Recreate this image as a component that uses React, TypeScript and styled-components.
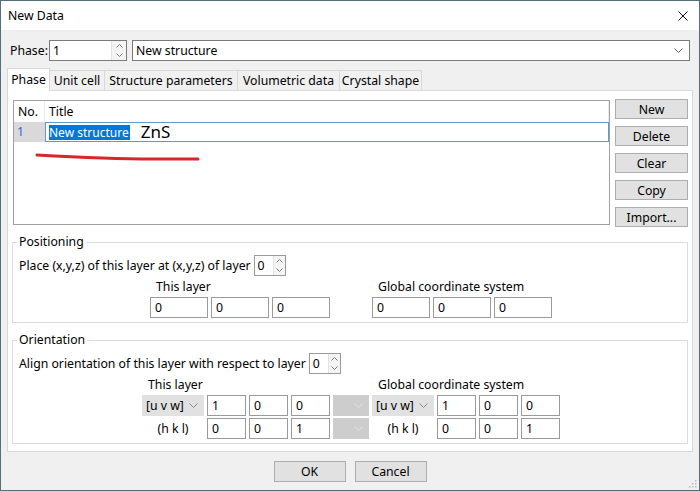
import React from "react";
import styled, { createGlobalStyle } from "styled-components";

const GlobalStyle = createGlobalStyle`
  html, body { margin: 0; padding: 0; background: #ffffff; }
  body {
    font-family: "Noto Sans", "Open Sans", "Liberation Sans", sans-serif;
    font-size: 12.25px;
    color: #000;
  }
  * { box-sizing: border-box; }
`;

const Window = styled.div`
  position: relative;
  width: 700px;
  height: 491px;
  border: 1px solid #52707c;
  background: #f0f0f0;
  display: flex;
  flex-direction: column;
  overflow: hidden;
`;

const TitleBar = styled.div`
  flex: none;
  height: 29px;
  background: #ffffff;
  display: flex;
  align-items: center;
  justify-content: space-between;
  padding: 0 11px 0 7px;
`;

const TitleText = styled.span`
  font-size: 12.25px;
`;

const Body = styled.div`
  flex: 1;
  min-height: 0;
  display: flex;
  flex-direction: column;
  padding: 10px 6px 8px 6px;
`;

const PhaseRow = styled.div`
  flex: none;
  display: flex;
  align-items: center;
  height: 21px;
  padding-left: 3px;
  margin-right: 3px;
`;

const FieldLabel = styled.span`
  flex: none;
  width: 39px;
`;

const Spin = styled.div<{ $w: number; $dark?: boolean }>`
  flex: none;
  display: flex;
  width: ${(p) => p.$w}px;
  height: 21px;
  border: 1px solid ${(p) => (p.$dark ? "#7a7a7a" : "#9a9a9a")};
  background: #ffffff;
`;

const SpinValue = styled.div`
  flex: 1;
  padding-left: 3px;
  line-height: 19px;
`;

const SpinArrows = styled.div<{ $w: number }>`
  flex: none;
  width: ${(p) => p.$w}px;
  display: flex;
  flex-direction: column;
  background: #f4f4f4;
  border-left: 1px solid #e2e2e2;
`;

const SpinArrow = styled.div`
  flex: 1;
  display: flex;
  align-items: center;
  justify-content: center;
`;

const Combo = styled.div`
  flex: 1;
  margin-left: 5px;
  height: 21px;
  border: 1px solid #7a7a7a;
  background: #ffffff;
  display: flex;
  align-items: center;
  justify-content: space-between;
  padding: 0 6px 0 3px;
`;

const TabStrip = styled.div`
  flex: none;
  position: relative;
  z-index: 1;
  display: flex;
  align-items: flex-start;
  height: 20px;
  margin-top: 9px;
`;

const Tab = styled.div<{ $w: number; $active?: boolean }>`
  flex: none;
  width: ${(p) => p.$w}px;
  height: ${(p) => (p.$active ? 23 : 20)}px;
  margin-top: ${(p) => (p.$active ? -2 : 0)}px;
  margin-left: ${(p) => (p.$active ? 0 : -1)}px;
  border: 1px solid #d9d9d9;
  border-bottom: none;
  background: ${(p) => (p.$active ? "#ffffff" : "#f0f0f0")};
  text-align: center;
  line-height: ${(p) => (p.$active ? 21 : 19)}px;
  white-space: nowrap;
  &:first-child {
    margin-left: 0;
  }
`;

const Panel = styled.div`
  flex: 1;
  min-height: 0;
  display: flex;
  flex-direction: column;
  background: #ffffff;
  border: 1px solid #d9d9d9;
  padding: 8px 4px 0 4px;
`;

const TopSection = styled.div`
  flex: none;
  display: flex;
  align-items: flex-start;
`;

const Table = styled.div`
  flex: none;
  width: 597px;
  height: 125px;
  margin: 1px 0 0 1px;
  border: 1px solid #a0a0a0;
  background: #ffffff;
  display: flex;
  flex-direction: column;
`;

const TableRow = styled.div<{ $h: number }>`
  display: grid;
  grid-template-columns: 31px 1fr;
  height: ${(p) => p.$h}px;
`;

const HeaderCell = styled.div`
  padding-left: 4px;
  line-height: 21px;
  border-right: 1px solid #ececec;
`;

const IndexCell = styled.div`
  background: #d9d9d9;
  color: #3a5fcd;
  padding-left: 3px;
  line-height: 20px;
`;

const EditCell = styled.div`
  border: 1px solid #5a9ad6;
  display: flex;
  align-items: center;
  gap: 11px;
  padding-left: 3px;
`;

const SelectedText = styled.span`
  background: #0078d7;
  color: #ffffff;
  line-height: 15px;
  padding: 0 1px 0 0;
  font-size: 12px;
`;

const BigText = styled.span`
  font-size: 17px;
  line-height: 18px;
`;

const SideButtons = styled.div`
  flex: none;
  display: flex;
  flex-direction: column;
  gap: 7px;
  width: 73px;
  margin-left: 5px;
`;

const Button = styled.button<{ $w?: number; $h?: number }>`
  width: ${(p) => (p.$w ? `${p.$w}px` : "100%")};
  height: ${(p) => p.$h ?? 20}px;
  padding: 0;
  border: 1px solid #adadad;
  background: #e1e1e1;
  font: inherit;
  color: #000;
`;

const Group = styled.fieldset<{ $top: number; $bottom: number }>`
  margin: ${(p) => p.$top}px 0 0 0;
  padding: 0 6px ${(p) => p.$bottom}px 6px;
  border: 1px solid #dcdcdc;
  min-width: 0;
`;

const Legend = styled.legend`
  padding: 0 2px;
  margin-left: -2px;
  line-height: 16px;
`;

const InlineRow = styled.div`
  display: flex;
  align-items: center;
  height: 21px;
  margin-top: 5px;
  gap: 3px;
  white-space: nowrap;
`;

const CoordBlocks = styled.div`
  display: flex;
  gap: 42px;
  margin: 3px 0 0 131px;
`;

const CoordBlock = styled.div`
  display: flex;
  flex-direction: column;
  gap: 2px;
`;

const SubLabel = styled.div<{ $span?: string }>`
  padding-left: 6px;
  line-height: 16px;
  white-space: nowrap;
  grid-column: ${(p) => p.$span ?? "auto"};
`;

const Inputs = styled.div`
  display: flex;
  gap: 3px;
`;

const NumBox = styled.div<{ $w?: number }>`
  width: ${(p) => (p.$w ? `${p.$w}px` : "auto")};
  height: 21px;
  border: 1px solid #9a9a9a;
  background: #ffffff;
  padding-left: 4px;
  line-height: 19px;
`;

const OrientGrid = styled.div`
  display: grid;
  grid-template-columns: 62px 39px 39px 39px 36px 62px 39px 39px 39px;
  grid-template-rows: 16px 21px 21px;
  column-gap: 3px;
  row-gap: 2px;
  margin: 3px 0 0 123px;
`;

const Select = styled.div<{ $disabled?: boolean }>`
  display: flex;
  align-items: center;
  justify-content: ${(p) => (p.$disabled ? "flex-end" : "space-between")};
  height: 21px;
  background: ${(p) => (p.$disabled ? "#cdcdcd" : "#e1e1e1")};
  padding: 0 6px 0 4px;
  white-space: nowrap;
`;

const PlainCell = styled.div`
  display: flex;
  align-items: center;
  justify-content: center;
  height: 21px;
`;

const Footer = styled.div`
  flex: none;
  display: flex;
  justify-content: center;
  gap: 9px;
  margin-top: 9px;
  height: 21px;
`;

const Annotation = styled.svg`
  position: absolute;
  left: 32px;
  top: 149px;
  pointer-events: none;
`;

const Grip = styled.svg`
  position: absolute;
  right: 2px;
  bottom: 2px;
`;

const Chevron = ({ color = "#606060" }: { color?: string }) => (
  <svg width="9" height="5" viewBox="0 0 9 5">
    <path d="M0.5 0.5 L4.5 4.5 L8.5 0.5" fill="none" stroke={color} strokeWidth="1" />
  </svg>
);

const Caret = ({ up }: { up?: boolean }) => (
  <svg width="7" height="4" viewBox="0 0 7 4">
    <path
      d={up ? "M0.5 3.5 L3.5 0.5 L6.5 3.5" : "M0.5 0.5 L3.5 3.5 L6.5 0.5"}
      fill="none"
      stroke="#7a7a7a"
      strokeWidth="1"
    />
  </svg>
);

const SpinBox = ({ value, w, arrowW, dark }: { value: string; w: number; arrowW: number; dark?: boolean }) => (
  <Spin $w={w} $dark={dark}>
    <SpinValue>{value}</SpinValue>
    <SpinArrows $w={arrowW}>
      <SpinArrow>
        <Caret up />
      </SpinArrow>
      <SpinArrow>
        <Caret />
      </SpinArrow>
    </SpinArrows>
  </Spin>
);

const tabs = [
  { label: "Phase", w: 43, active: true },
  { label: "Unit cell", w: 56 },
  { label: "Structure parameters", w: 134 },
  { label: "Volumetric data", w: 103 },
  { label: "Crystal shape", w: 83 },
];

const sideButtons = ["New", "Delete", "Clear", "Copy", "Import..."];

export default function App() {
  return (
    <>
      <GlobalStyle />
      <Window>
        <TitleBar>
          <TitleText>New Data</TitleText>
          <svg width="10" height="10" viewBox="0 0 10 10">
            <path d="M0.5 0.5 L9.5 9.5 M9.5 0.5 L0.5 9.5" stroke="#111" strokeWidth="1" />
          </svg>
        </TitleBar>
        <Body>
          <PhaseRow>
            <FieldLabel>Phase:</FieldLabel>
            <SpinBox value="1" w={78} arrowW={15} dark />
            <Combo>
              <span>New structure</span>
              <Chevron />
            </Combo>
          </PhaseRow>

          <TabStrip>
            {tabs.map((t) => (
              <Tab key={t.label} $w={t.w} $active={t.active}>
                {t.label}
              </Tab>
            ))}
          </TabStrip>

          <Panel>
            <TopSection>
              <Table>
                <TableRow $h={21}>
                  <HeaderCell>No.</HeaderCell>
                  <HeaderCell>Title</HeaderCell>
                </TableRow>
                <TableRow $h={20}>
                  <IndexCell>1</IndexCell>
                  <EditCell>
                    <SelectedText>New structure</SelectedText>
                    <BigText>ZnS</BigText>
                  </EditCell>
                </TableRow>
              </Table>
              <SideButtons>
                {sideButtons.map((b) => (
                  <Button key={b}>{b}</Button>
                ))}
              </SideButtons>
            </TopSection>

            <Group $top={7} $bottom={4}>
              <Legend>Positioning</Legend>
              <InlineRow>
                <span>Place (x,y,z) of this layer at (x,y,z) of layer</span>
                <SpinBox value="0" w={32} arrowW={12} />
              </InlineRow>
              <CoordBlocks>
                <CoordBlock>
                  <SubLabel>This layer</SubLabel>
                  <Inputs>
                    {["0", "0", "0"].map((v, i) => (
                      <NumBox key={i} $w={58}>
                        {v}
                      </NumBox>
                    ))}
                  </Inputs>
                </CoordBlock>
                <CoordBlock>
                  <SubLabel>Global coordinate system</SubLabel>
                  <Inputs>
                    {["0", "0", "0"].map((v, i) => (
                      <NumBox key={i} $w={58}>
                        {v}
                      </NumBox>
                    ))}
                  </Inputs>
                </CoordBlock>
              </CoordBlocks>
            </Group>

            <Group $top={9} $bottom={4}>
              <Legend>Orientation</Legend>
              <InlineRow>
                <span>Align orientation of this layer with respect to layer</span>
                <SpinBox value="0" w={32} arrowW={12} />
              </InlineRow>
              <OrientGrid>
                <SubLabel $span="1 / 6">This layer</SubLabel>
                <SubLabel $span="6 / 10">Global coordinate system</SubLabel>

                <Select>
                  <span>[u v w]</span>
                  <Chevron color="#8a8a8a" />
                </Select>
                <NumBox>1</NumBox>
                <NumBox>0</NumBox>
                <NumBox>0</NumBox>
                <Select $disabled>
                  <Chevron color="#e2e2e2" />
                </Select>
                <Select>
                  <span>[u v w]</span>
                  <Chevron color="#8a8a8a" />
                </Select>
                <NumBox>1</NumBox>
                <NumBox>0</NumBox>
                <NumBox>0</NumBox>

                <PlainCell>(h k l)</PlainCell>
                <NumBox>0</NumBox>
                <NumBox>0</NumBox>
                <NumBox>1</NumBox>
                <Select $disabled>
                  <Chevron color="#e2e2e2" />
                </Select>
                <PlainCell>(h k l)</PlainCell>
                <NumBox>0</NumBox>
                <NumBox>0</NumBox>
                <NumBox>1</NumBox>
              </OrientGrid>
            </Group>
          </Panel>

          <Footer>
            <Button $w={72} $h={21}>OK</Button>
            <Button $w={72} $h={21}>Cancel</Button>
          </Footer>
        </Body>

        <Annotation width="170" height="14" viewBox="0 0 170 14">
          <path
            d="M4 5 C 40 7, 90 9, 120 9 S 155 9, 165 9"
            fill="none"
            stroke="#d9262b"
            strokeWidth="3"
            strokeLinecap="round"
          />
        </Annotation>

        <Grip width="8" height="8" viewBox="0 0 8 8">
          <rect x="6" y="0" width="1.5" height="1.5" fill="#bbb" />
          <rect x="3" y="3" width="1.5" height="1.5" fill="#bbb" />
          <rect x="6" y="3" width="1.5" height="1.5" fill="#bbb" />
          <rect x="0" y="6" width="1.5" height="1.5" fill="#bbb" />
          <rect x="3" y="6" width="1.5" height="1.5" fill="#bbb" />
          <rect x="6" y="6" width="1.5" height="1.5" fill="#bbb" />
        </Grip>
      </Window>
    </>
  );
}
